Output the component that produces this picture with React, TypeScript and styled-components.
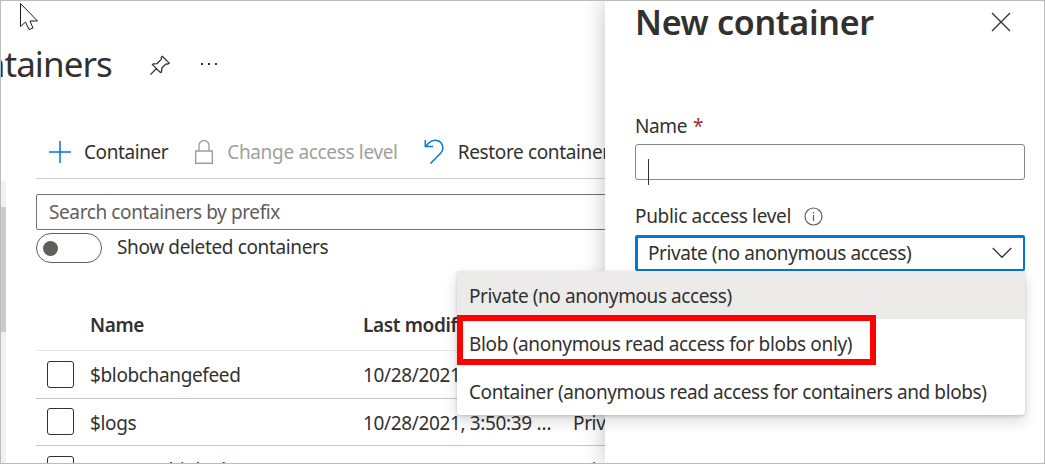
import React from 'react';
import styled, { createGlobalStyle } from 'styled-components';

const Global = createGlobalStyle`
  *, *::before, *::after { box-sizing: border-box; }
  body { margin: 0; background: #fff; }
`;

const Frame = styled.div`
  position: relative;
  width: 1045px;
  height: 464px;
  display: flex;
  overflow: hidden;
  border: 1px solid #bcbcbc;
  background: #fff;
  color: #323130;
  font-family: 'Noto Sans', 'Open Sans', sans-serif;
  font-size: 19px;
`;

const Txt = styled.span<{ $ls?: number }>`
  white-space: pre;
  line-height: 26px;
  letter-spacing: ${(p) => p.$ls ?? -0.36}px;
`;

const Main = styled.main`
  flex: 0 0 604px;
  height: 462px;
  overflow: hidden;
`;

const TitleRow = styled.header`
  display: flex;
  align-items: center;
  height: 126px;
`;

const Title = styled.h1`
  display: flex;
  justify-content: flex-end;
  flex: none;
  margin: 0;
  width: 111px;
  white-space: pre;
  font-size: 35px;
  font-weight: 400;
  line-height: 46px;
  letter-spacing: -0.9px;
`;

const PinIcon = styled.svg`
  margin: 2px 0 0 37px;
  flex: none;
`;

const DotsIcon = styled.svg`
  margin-left: 29px;
  flex: none;
`;

const Body = styled.div`
  display: flex;
  height: 336px;
`;

const Track = styled.div`
  width: 5px;
  height: 282px;
  margin-top: 54px;
  padding-top: 26px;
  background: #f1f1f1;
`;

const Thumb = styled.div`
  height: 125px;
  background: #cbcbcb;
`;

const Content = styled.section`
  flex: 1;
  min-width: 0;
  margin-left: 30px;
  overflow: hidden;
`;

const CommandBar = styled.div`
  display: flex;
  align-items: center;
  height: 52px;
  padding-bottom: 2px;
  border-bottom: 1px solid #d2d0ce;
`;

const Command = styled.div<{ $disabled?: boolean; $gap: number; $left: number }>`
  display: flex;
  flex: none;
  align-items: center;
  gap: ${(p) => p.$gap}px;
  margin-left: ${(p) => p.$left}px;
  color: ${(p) => (p.$disabled ? '#a19f9d' : '#323130')};
`;

const Search = styled.div`
  display: flex;
  align-items: center;
  width: 700px;
  height: 36px;
  margin-top: 15px;
  padding-left: 12px;
  border: 1px solid #74726f;
  border-radius: 2px;
  color: #605e5c;
`;

const ToggleRow = styled.div`
  display: flex;
  align-items: center;
  gap: 15px;
  height: 30px;
  margin-top: 3px;
`;

const ToggleLabel = styled(Txt)`
  padding-bottom: 2px;
`;

const Toggle = styled.div`
  display: flex;
  align-items: center;
  width: 66px;
  height: 30px;
  padding-left: 6px;
  border: 1px solid #605e5c;
  border-radius: 15px;
`;

const Knob = styled.div`
  width: 15px;
  height: 15px;
  border-radius: 50%;
  background: #605e5c;
`;

const Row = styled.div<{ $h: number; $pad?: number; $head?: boolean }>`
  display: grid;
  grid-template-columns: 54px 273px 210px 200px;
  align-items: center;
  height: ${(p) => p.$h}px;
  border-bottom: 1px solid ${(p) => (p.$head ? '#e6e5e4' : '#c6c5c4')};
  font-weight: ${(p) => (p.$head ? 600 : 400)};

  & > ${Txt} {
    padding-top: ${(p) => p.$pad ?? 0}px;
  }
`;

const Table = styled.div`
  width: 737px;
  margin-top: 37px;
`;

const Checkbox = styled.div`
  width: 27px;
  height: 27px;
  margin: 0 0 1px 11px;
  border: 1px solid #323130;
  border-radius: 3px;
`;

const Panel = styled.aside`
  position: relative;
  display: flex;
  flex-direction: column;
  flex: 0 0 439px;
  height: 462px;
  padding: 0 19px 0 30px;
  background: #fff;
  box-shadow: 0 0 22px rgba(0, 0, 0, 0.24);
`;

const PanelHead = styled.div`
  display: flex;
  align-items: center;
  justify-content: space-between;
  height: 42px;
  padding-right: 14px;
`;

const PanelTitle = styled.h2`
  margin: 0;
  white-space: pre;
  font-size: 34px;
  font-weight: 600;
  line-height: 42px;
  letter-spacing: -0.3px;
`;

const FieldLabel = styled.div<{ $top: number }>`
  display: flex;
  align-items: center;
  height: 26px;
  margin-top: ${(p) => p.$top}px;
`;

const Required = styled.span`
  margin-left: 6px;
  color: #a4262c;
  line-height: 26px;
`;

const InfoIcon = styled.svg`
  margin-left: 13px;
`;

const NameInput = styled.div`
  height: 36px;
  margin-top: 5px;
  padding: 14px 0 0 12px;
  border: 1px solid #8a8886;
  border-radius: 3px;
`;

const Caret = styled.div`
  width: 1px;
  height: 26px;
  background: #323130;
`;

const Select = styled.div`
  display: flex;
  align-items: center;
  justify-content: space-between;
  height: 36px;
  margin-top: 6px;
  padding: 0 11px 1px 10px;
  border: solid #0078d4;
  border-width: 3px 2px 2px 3px;
  border-radius: 2px;
`;

const Menu = styled.div`
  position: absolute;
  left: -148px;
  top: 270px;
  width: 568px;
  height: 144px;
  border-radius: 3px;
  background: #fff;
  box-shadow: 0 6px 14px rgba(0, 0, 0, 0.16), 0 1px 3px rgba(0, 0, 0, 0.16);
`;

const Option = styled.div<{ $active?: boolean }>`
  display: flex;
  align-items: center;
  height: 48px;
  padding: 2px 0 0 12px;
  background: ${(p) => (p.$active ? '#edebe9' : 'transparent')};
`;

const Highlight = styled.div`
  position: absolute;
  left: 0;
  top: 44px;
  width: 419px;
  height: 50px;
  border: 6px solid #fe0000;
`;

const Pointer = styled.svg`
  position: absolute;
  left: 18px;
  top: 1px;
`;

const rows = [
  { name: '$blobchangefeed', date: '10/28/2021, 3:50:39 …', access: 'Private', h: 48, pad: 0 },
  { name: '$logs', date: '10/28/2021, 3:50:39 …', access: 'Private', h: 47, pad: 2 },
  { name: 'azure-webjobs-hosts', date: '10/28/2021, 3:50:39 …', access: 'Private', h: 48, pad: 0 },
];

export default function App() {
  return (
    <Frame>
      <Global />
      <Main>
        <TitleRow>
          <Title>Containers</Title>
          <PinIcon width="22" height="22" viewBox="0 0 24 24" fill="none" stroke="#323130" strokeWidth="1.4">
            <path d="M1.5 22.5 8.5 15.5M14.5 2.5 22 10 20.5 11 18.5 10.8 14 15.2 13.6 19.6 12.4 20.2 3.8 11.6 4.8 10.8 8.8 10.4 13.6 5.6 13.4 3.6Z" />
          </PinIcon>
          <DotsIcon width="18" height="4" viewBox="0 0 18 4" fill="#323130">
            <rect x="1" y="1" width="2" height="2" />
            <rect x="8" y="1" width="2" height="2" />
            <rect x="15" y="1" width="2" height="2" />
          </DotsIcon>
        </TitleRow>
        <Body>
          <Track><Thumb /></Track>
          <Content>
            <CommandBar>
              <Command $left={12} $gap={12}>
                <svg width="24" height="24" viewBox="0 0 24 24" stroke="#0078d4" strokeWidth="1.5">
                  <path d="M1 12H23M12 1V23" />
                </svg>
                <Txt $ls={-0.42}>Container</Txt>
              </Command>
              <Command $left={26} $gap={13} $disabled>
                <svg width="20" height="26" viewBox="0 0 20 26" fill="none" stroke="#a19f9d" strokeWidth="1.4">
                  <path d="M1.7 12H18.3V24.3H1.7ZM5 12V6.5a5 5 0 0 1 10 0V12" />
                </svg>
                <Txt $ls={-0.33}>Change access level</Txt>
              </Command>
              <Command $left={26} $gap={14}>
                <svg width="20" height="26" viewBox="0 0 20 26" fill="none" stroke="#0078d4" strokeWidth="1.5">
                  <path d="M1.3 1V7.6H9M1.5 7.4 5 3.8C9 .2 14.5 .6 17.2 4c2.6 3.3 2 7.6-.6 10.2L6.5 24.5" />
                </svg>
                <Txt>Restore containers</Txt>
              </Command>
            </CommandBar>
            <Search><Txt $ls={-0.39}>Search containers by prefix</Txt></Search>
            <ToggleRow>
              <Toggle><Knob /></Toggle>
              <ToggleLabel>Show deleted containers</ToggleLabel>
            </ToggleRow>
            <Table>
              <Row $h={51} $head>
                <span />
                <Txt>Name</Txt>
                <Txt>Last modified</Txt>
              </Row>
              {rows.map((r) => (
                <Row key={r.name} $h={r.h} $pad={r.pad}>
                  <Checkbox />
                  <Txt>{r.name}</Txt>
                  <Txt>{r.date}</Txt>
                  <Txt>{r.access}</Txt>
                </Row>
              ))}
            </Table>
          </Content>
        </Body>
      </Main>
      <Panel>
        <PanelHead>
          <PanelTitle>New container</PanelTitle>
          <svg width="20" height="20" viewBox="0 0 20 20" stroke="#323130" strokeWidth="1.3">
            <path d="M1 1 19 19M19 1 1 19" />
          </svg>
        </PanelHead>
        <FieldLabel $top={70}>
          <Txt $ls={-0.4}>Name</Txt>
          <Required>*</Required>
        </FieldLabel>
        <NameInput><Caret /></NameInput>
        <FieldLabel $top={23}>
          <Txt $ls={-0.32}>Public access level</Txt>
          <InfoIcon width="19" height="19" viewBox="0 0 19 19" fill="none" stroke="#605e5c" strokeWidth="1.2">
            <circle cx="9.5" cy="9.5" r="8.5" />
            <path d="M9.5 8V14M9.5 5V6.5" />
          </InfoIcon>
        </FieldLabel>
        <Select>
          <Txt $ls={-0.4}>Private (no anonymous access)</Txt>
          <svg width="20" height="12" viewBox="0 0 20 12" fill="none" stroke="#323130" strokeWidth="1.3">
            <path d="M.7 1 10 10.3 19.3 1" />
          </svg>
        </Select>
        <Menu>
          <Option $active><Txt $ls={-0.42}>Private (no anonymous access)</Txt></Option>
          <Option><Txt $ls={-0.34}>Blob (anonymous read access for blobs only)</Txt></Option>
          <Option><Txt $ls={-0.4}>Container (anonymous read access for containers and blobs)</Txt></Option>
          <Highlight />
        </Menu>
      </Panel>
      <Pointer width="20" height="29" viewBox="0 0 20 29" fill="#fff" stroke="#1b1b2b" strokeWidth="1">
        <path d="M1.5 1.5V24.5L6.5 20 10 27.5 14 26 11 19H18.5Z" />
      </Pointer>
    </Frame>
  );
}
